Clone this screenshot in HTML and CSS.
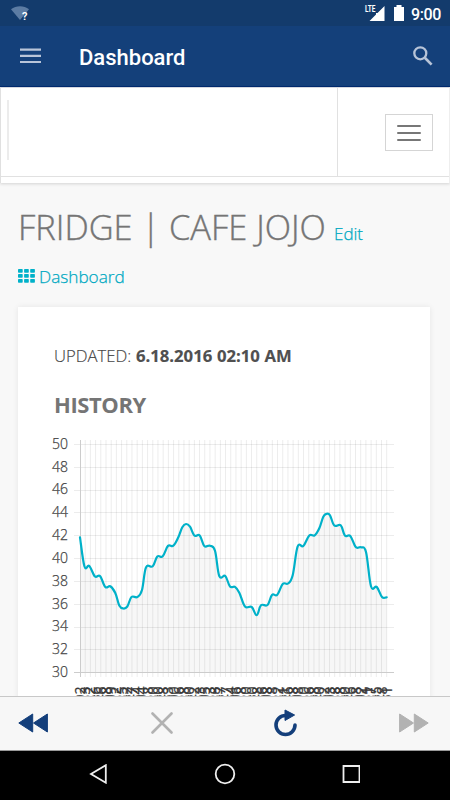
FILE: index.html
```html
<!DOCTYPE html>
<html lang="en">
<head>
<meta charset="utf-8">
<title>Dashboard</title>
<link rel="stylesheet" href="styles.css">
</head>
<body>
<div class="screen">
  <div class="status">
    <svg class="wifi" width="20" height="18" viewBox="0 0 20 18"><path d="M0 3.2C5-.8 13-.8 18 3.2L9 14Z" fill="#5c7ca3"/><text x="11" y="13.500" class="wifi-mark">?</text></svg>
    <svg class="signal" width="44" height="20" viewBox="0 0 44 20"><text x="1" y="9" class="lte" textLength="10.5" lengthAdjust="spacingAndGlyphs">LTE</text><path d="M20.500 3v15H5.500l6.500-6.500V10h1.500z" fill="#fff"/><path d="M30 4h2.500V2h5v2H40v14H30z" fill="#fff"/></svg>
    <span class="clock">9:00</span>
  </div>
  <header class="appbar">
    <svg width="21" height="16" viewBox="0 0 21 16"><path d="M0 1.6h21M0 7.8h21M0 14h21" stroke="#b9c5d9" stroke-width="2.2"/></svg>
    <h1 class="app-title">Dashboard</h1>
    <svg width="20" height="20" viewBox="0 0 20 20" fill="none" stroke="#b7c4d8"><circle cx="7.3" cy="7.3" r="6" stroke-width="2.3"/><path d="M11.8 11.8l6.8 6.8" stroke-width="2.7"/></svg>
  </header>
  <nav class="site-nav">
    <div class="brand"><div class="logo"></div></div>
    <div class="toggle-cell"><button class="toggle" aria-label="Menu"><i></i><i></i><i></i></button></div>
  </nav>
  <main class="page">
    <div class="heading"><h2>FRIDGE | CAFE JOJO</h2><a>Edit</a></div>
    <div class="crumb">
      <svg width="17" height="14" viewBox="0 0 17 14" fill="#00b1c9"><rect width="4.7" height="3.7" rx=".7"/><rect x="6.1" width="4.7" height="3.7" rx=".7"/><rect x="12.2" width="4.7" height="3.7" rx=".7"/><rect y="5" width="4.7" height="3.7" rx=".7"/><rect x="6.1" y="5" width="4.7" height="3.7" rx=".7"/><rect x="12.2" y="5" width="4.7" height="3.7" rx=".7"/><rect y="10" width="4.7" height="3.7" rx=".7"/><rect x="6.1" y="10" width="4.7" height="3.7" rx=".7"/><rect x="12.2" y="10" width="4.7" height="3.7" rx=".7"/></svg>
      <a>Dashboard</a>
    </div>
    <section class="card">
      <p class="updated">UPDATED: <b>6.18.2016 02:10 AM</b></p>
      <h3>HISTORY</h3>
      <svg id="chart" class="chart" width="360" height="256" viewBox="40 440 360 256"></svg>
    </section>
  </main>
  <div class="toolbar">
    <svg width="30" height="30" viewBox="0 0 30 30" fill="#143f7b" stroke="#143f7b" stroke-linejoin="round"><path d="M.8 14L14.7 5v18zM15.5 14L29.4 5v18z"/></svg>
    <svg width="22" height="24" viewBox="0 0 22 24"><path d="M1.500 1.500l19 19M20.500 1.500l-19 19" stroke="#b2b2b2" stroke-width="2.600" stroke-linecap="round"/></svg>
    <svg width="26" height="30" viewBox="0 0 26 30"><path d="M12.500 6.500A9.500 9.500 0 1 0 22 16" fill="none" stroke="#143f7b" stroke-width="3.600" stroke-linecap="round"/><path d="M12 1L21.600 6L12 11.500z" fill="#143f7b" stroke="#143f7b" stroke-linejoin="round"/></svg>
    <svg width="30" height="30" viewBox="0 0 30 30" fill="#b2b2b2" stroke="#b2b2b2" stroke-linejoin="round"><path d="M29.200 14L15.300 5v18zM14.500 14L.600 5v18z"/></svg>
  </div>
  <div class="system-nav">
    <svg width="18" height="20" viewBox="0 0 18 20"><path d="M16.800 1.200v17.500L2 10z"/></svg>
    <svg width="22" height="22" viewBox="0 0 22 22"><circle cx="11" cy="11" r="9.300"/></svg>
    <svg width="18" height="20" viewBox="0 0 18 20"><path d="M1.500 2h16v16h-16z"/></svg>
  </div>
</div>
<script src="chart.js"></script>
</body>
</html>
```

FILE: styles.css
```css
* { box-sizing: border-box; }
body { margin: 0; font-family: "Open Sans", sans-serif; }
h1, h2, h3, p { margin: 0; }
svg { display: block; flex: none; }
.screen { width: 450px; height: 800px; display: flex; flex-direction: column; overflow: hidden; background: #f8f8f8; }
.status { height: 26px; flex: none; display: flex; align-items: flex-start; background: #133b6c; color: #fff; padding: 3px 9px 0 11px; }
.wifi { margin-top: 3px; }
.wifi-mark { font: 700 11px Roboto, sans-serif; fill: #fff; }
.signal { margin-left: auto; }
.lte { font: 700 9px Roboto, sans-serif; fill: #fff; }
.clock { font: 500 16px/21px Roboto, sans-serif; margin: 1px 0 0 3px; letter-spacing: -.4px; }
.appbar { height: 61px; flex: none; display: flex; align-items: center; background: #14407a; border-bottom: 1px solid #002a70; padding: 0 17px 0 20px; }
.app-title { flex: 1; margin-left: 38px; font: 500 22px/30px Roboto, sans-serif; color: #fff; padding-top: 3px; }
.site-nav { height: 96px; flex: none; display: flex; background: #fff; border-top: 1px solid #d5d8df; border-left: 1px solid #e0e0e0; border-right: 1px solid #eee; box-shadow: 0 1px 3px rgba(0,0,0,.15); padding-bottom: 6px; z-index: 1; }
.brand { width: 337px; border-right: 1px solid #e1e1e1; border-bottom: 1px solid #e1e1e1; padding: 12px 0 0 6px; }
.logo { height: 60px; border-left: 2px solid #ececec; }
.toggle-cell { flex: 1; border-bottom: 1px solid #e1e1e1; padding: 26px 0 0 47px; }
.toggle { display: flex; flex-direction: column; justify-content: center; align-items: center; gap: 5px; width: 48px; height: 37px; background: #fff; border: 1px solid #d5d5d5; padding: 0; }
.toggle i { width: 24px; height: 2px; background: #777; border-radius: 1px; }
.page { flex: 1; min-height: 0; overflow: hidden; padding: 0 20px 0 18px; }
.heading { display: flex; align-items: baseline; margin-top: 19px; height: 50px; }
.heading h2 { font-weight: 300; font-size: 34.4px; line-height: 50px; color: #757575; white-space: nowrap; width: 316px; -webkit-text-stroke: .4px #757575; }
.heading a, .crumb a { color: #00a9c2; font-weight: 300; font-size: 17px; -webkit-text-stroke: .25px #00a9c2; }
.crumb { display: flex; align-items: center; gap: 4px; height: 24px; margin-top: 12px; }
.crumb a { font-size: 17.2px; }
.card { margin-top: 19px; height: 450px; background: #fff; box-shadow: 0 0 6px rgba(0,0,0,.08); padding: 37px 0 0 36px; }
.updated { font-size: 16.7px; font-weight: 300; line-height: 24px; color: #444; -webkit-text-stroke: .15px #444; white-space: nowrap; word-spacing: .3px; }
.updated b { font-weight: 700; color: #505050; }
.card h3 { font-size: 22px; font-weight: 700; line-height: 30px; color: #757575; margin-top: 21px; letter-spacing: -.4px; }
.chart { margin: 21px 0 0 -14px; overflow: visible; }
.grid { fill: none; stroke: #000; stroke-opacity: .075; stroke-width: 1; }
.axis { fill: none; stroke: #ccc; stroke-width: 1; }
.area { fill: #000; fill-opacity: .03; }
.curve { fill: none; stroke: #00b1c9; stroke-width: 2.2; stroke-linejoin: round; stroke-linecap: round; }
.y-label, .x-label { font: 300 14px "Open Sans", sans-serif; fill: #444; stroke: #444; stroke-width: .25; }
.x-label { font-weight: 400; fill: #333; }
.y-label, .x-label { text-anchor: end; }
.toolbar { height: 55px; flex: none; display: grid; grid-template-columns: 133px 122px 126px 30px; justify-content: start; align-items: center; background: #f7f7f7; border-top: 1px solid #c8c8c8; border-bottom: 1px solid #999; padding: 0 21px 0 18px; z-index: 1; }
.system-nav { height: 49px; flex: none; background: #000; display: grid; grid-template-columns: 125px 128px 18px; align-items: center; padding: 0 0 3px 89px; }
.system-nav svg { fill: none; stroke: #eee; stroke-width: 1.8; }
```

FILE: chart.js
```js
const chart = document.getElementById("chart");
const points = [
  [80, 537.3], [84.5, 566.5], [89.3, 566], [95, 576.5], [100, 576], [105.3, 587], [110.3, 586.3], [115.3, 593],
  [119.3, 605.5], [123.3, 608.5], [127.3, 606.5], [131.5, 597], [137.3, 597], [142, 590], [146, 567.5], [152.7, 566.3],
  [157.3, 556.5], [162.7, 556.3], [168, 545.9], [173.3, 545.7], [178.3, 537.3], [182.3, 527.3], [186, 524],
  [190, 526.7], [194.3, 535.5], [199.7, 535.5], [204.3, 546], [210, 545.7], [215, 550.7], [219.3, 576],
  [225.3, 576], [230, 586.5], [235, 586.9], [239.3, 592.7], [245, 606.5], [251.7, 607], [256.7, 615.2], [261, 605.3],
  [267.5, 605], [272, 595], [277.3, 594.7], [282.7, 583.9], [288, 583.5], [292.7, 575.3], [297.6, 546.7],
  [303.3, 546], [309.3, 535.5], [314.7, 535.3], [319.3, 528.3], [323.3, 516.7], [326.7, 513.8], [330, 515.3],
  [334.3, 525.5], [340.7, 525.3], [344.9, 535.5], [350.3, 535.9], [355.7, 547], [361, 547.3], [366, 552],
  [371, 586.3], [376.7, 586.9], [382, 597], [386.7, 597.3]
];
const at = i => points[Math.max(0, Math.min(points.length - 1, i))];
let line = "M" + points[0];
for (let i = 0; i < points.length - 1; i++) {
  const [a, b, c, d] = [at(i - 1), at(i), at(i + 1), at(i + 2)];
  const k = 0.19;
  line += `C${b[0] + (c[0] - a[0]) * k},${b[1] + (c[1] - a[1]) * k} ${c[0] - (d[0] - b[0]) * k},${c[1] - (d[1] - b[1]) * k} ${c}`;
}
const step = (386.7 - 80) / 59;
const lastDigits = "232668925274480083068023538774680086882168806802388068217580";
let grid = "", labels = "";
for (let i = 0; i < 60; i++) {
  const x = 80 + i * step;
  if (i) grid += `M${x} 440V677`;
  const digit = i === 59 ? "1" : lastDigits[i];
  labels += `<text class="x-label" transform="translate(${x + 5} 686.5) rotate(-90)">${(i * 7) % 6}${digit}</text>`;
}
for (let i = 0; i <= 10; i++) {
  const y = 444 + i * 22.83;
  const row = Math.round(y) + 0.5;
  if (i < 10) grid += `M74 ${row}H394`;
  labels += `<text class="y-label" x="68" y="${y + 4.7}">${50 - i * 2}</text>`;
}
chart.innerHTML = `<path class="area" d="${line}V672H80Z"/><path class="grid" d="${grid}"/>
  <path class="axis" d="M80.5 440V677M74 672.5H394"/><path class="curve" d="${line}"/>${labels}`;
```
